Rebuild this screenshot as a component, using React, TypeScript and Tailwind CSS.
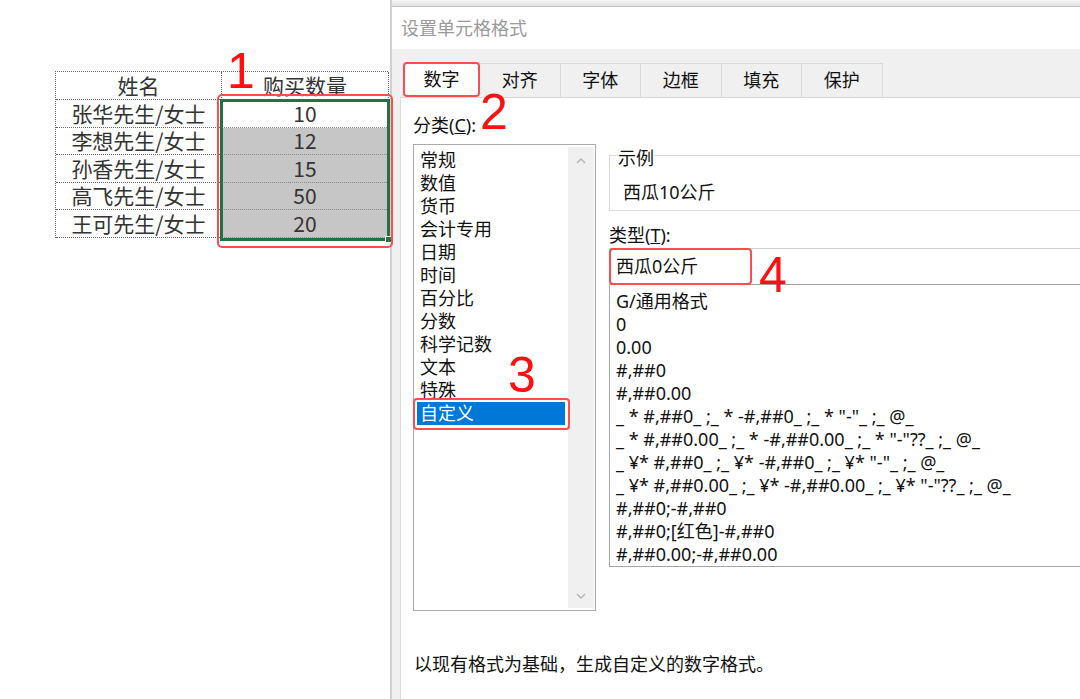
import { FC } from 'react';

const people = [
  { name: '张华先生/女士', qty: '10' },
  { name: '李想先生/女士', qty: '12' },
  { name: '孙香先生/女士', qty: '15' },
  { name: '高飞先生/女士', qty: '50' },
  { name: '王可先生/女士', qty: '20' },
];

const tabs = ['数字', '对齐', '字体', '边框', '填充', '保护'];

const categories = [
  '常规',
  '数值',
  '货币',
  '会计专用',
  '日期',
  '时间',
  '百分比',
  '分数',
  '科学记数',
  '文本',
  '特殊',
  '自定义',
];

const formats = [
  'G/通用格式',
  '0',
  '0.00',
  '#,##0',
  '#,##0.00',
  '_ * #,##0_ ;_ * -#,##0_ ;_ * "-"_ ;_ @_',
  '_ * #,##0.00_ ;_ * -#,##0.00_ ;_ * "-"??_ ;_ @_',
  '_ ¥* #,##0_ ;_ ¥* -#,##0_ ;_ ¥* "-"_ ;_ @_',
  '_ ¥* #,##0.00_ ;_ ¥* -#,##0.00_ ;_ ¥* "-"??_ ;_ @_',
  '#,##0;-#,##0',
  '#,##0;[红色]-#,##0',
  '#,##0.00;-#,##0.00',
];

// red step numbers drawn over the screenshot
const Mark: FC<{ n: string; className: string }> = ({ n, className }) => (
  <span
    className={`absolute z-30 text-[50px] leading-none text-[#ff1010] font-['Liberation_Sans',sans-serif] ${className}`}
  >
    {n}
  </span>
);

const Chevron: FC<{ up?: boolean }> = ({ up }) => (
  <svg width="10" height="6" viewBox="0 0 10 6">
    <polyline
      points={up ? '1,5 5,1 9,5' : '1,1 5,5 9,1'}
      fill="none"
      stroke="#b0b0b0"
      strokeWidth="1.3"
    />
  </svg>
);

const Sheet = () => (
  <div className="w-[390px] shrink-0 pt-[71px] pl-[55px] font-['Noto_Sans_CJK_SC',sans-serif] text-[21px] text-[#333]">
    <div className="relative w-[333px] border-t border-l border-dotted border-[#666]">
      <div className="grid grid-cols-[166px_167px]">
        <div className="h-[28px] flex items-center justify-center border-r border-b border-dotted border-[#666]">
          姓名
        </div>
        <div className="h-[28px] flex items-center justify-center border-r border-b border-dotted border-[#666]">
          购买数量
        </div>
        {people.map((p, i) => (
          <div key={p.name} className="contents">
            <div className="h-[27.5px] flex items-center justify-center border-r border-b border-dotted border-[#666]">
              {p.name}
            </div>
            <div
              className={`h-[27.5px] flex items-center justify-center border-r border-b border-dotted border-[#888] ${
                i === 0 ? 'bg-white' : 'bg-[#c6c6c6]'
              }`}
            >
              {p.qty}
            </div>
          </div>
        ))}
      </div>

      <div className="absolute z-10 left-[164px] top-[27px] w-[170px] h-[142px] border-[3px] border-[#217346]">
        <div className="absolute -right-[5px] -bottom-[5px] w-[7px] h-[7px] bg-[#217346] border border-white" />
      </div>
      <div className="absolute z-20 left-[161px] top-[22px] w-[176px] h-[154px] rounded-[5px] border-2 border-[#ff4d4d]" />
    </div>
  </div>
);

const Dialog = () => (
  <div className="flex-1 min-w-0 flex flex-col border-l-2 border-[#d0d0d0] font-['Noto_Sans','Noto_Sans_CJK_SC',sans-serif] text-[18px] text-[#111]">
    <div className="h-[7px] bg-linear-to-b from-[#f6f6f6] to-[#e2e2e2] border-b border-[#c4c4c4]" />
    <div className="h-[42px] flex items-center pl-[9px] bg-white text-[#9a9a9a]">
      设置单元格格式
    </div>

    <div className="flex-1 flex flex-col bg-[#f0f0f0] pl-[8px]">
      <div className="h-[48px] flex items-end pl-[3px]">
        {tabs.map((t, i) =>
          i === 0 ? (
            <div
              key={t}
              className="w-[77px] h-[35px] flex items-center justify-center bg-white rounded-[4px] border-2 border-[#ff4d4d]"
            >
              {t}
            </div>
          ) : (
            <div
              key={t}
              className="w-[80.5px] h-[34px] flex items-center justify-center border-t border-r border-[#dadada]"
            >
              {t}
            </div>
          )
        )}
      </div>

      <div className="flex-1 overflow-hidden bg-white border-l border-t border-[#dadada] pl-[12px] pt-[17px]">
        <div className="flex">
          <div className="w-[183px] shrink-0">
            <div className="h-[20px] leading-[20px]">
              分类(<span className="underline">C</span>):
            </div>
            <div className="mt-[9px] h-[467px] flex border border-[#ababab]">
              <div className="flex-1 pt-[4px] px-[3px]">
                {categories.map((c, i) =>
                  i === categories.length - 1 ? (
                    <div
                      key={c}
                      className="relative h-[23px] leading-[23px] pl-[3px] bg-[#0078d7] text-white"
                    >
                      {c}
                      <div className="absolute -left-[4px] -right-[5px] -top-[4px] -bottom-[5px] rounded-[4px] border-2 border-[#ff4d4d]" />
                    </div>
                  ) : (
                    <div key={c} className="h-[23px] leading-[23px] pl-[3px]">
                      {c}
                    </div>
                  )
                )}
              </div>
              <div className="w-[26px] my-[2px] mr-[1px] bg-[#f0f0f0] flex flex-col items-center justify-between pt-[11px] pb-[9px]">
                <Chevron up />
                <Chevron />
              </div>
            </div>
          </div>

          <div className="w-[500px] shrink-0 ml-[13px]">
            <div className="relative mt-[40px] h-[56px] border border-[#dcdcdc] pl-[13px] pt-[25px]">
              <span className="absolute left-[8px] -top-[9px] leading-[22px] bg-white">
                示例
              </span>
              <div className="leading-[22px]">西瓜10公斤</div>
            </div>
            <div className="mt-[13px] leading-[22px]">
              类型(<span className="underline">T</span>):
            </div>
            <div className="relative mt-[2px] h-[37px] flex items-center pl-[6px] border border-[#d0d0d0] border-b-[#9f9f9f]">
              西瓜0公斤
              <div className="absolute -left-px -top-px w-[143px] h-[37px] rounded-[4px] border-2 border-[#ff4d4d]" />
            </div>
            <div className="h-[282px] border-l border-b border-[#a5a5a5] pt-[5px]">
              {formats.map((f) => (
                <div key={f} className="h-[23px] leading-[23px] pl-[6px] whitespace-pre">
                  {f}
                </div>
              ))}
            </div>
          </div>
        </div>

        <p className="mt-[42px] pl-px leading-[22px]">
          以现有格式为基础，生成自定义的数字格式。
        </p>
      </div>
    </div>
  </div>
);

const App = () => {
  return (
    <div className="relative w-[1080px] h-[699px] overflow-hidden bg-white flex">
      <Sheet />
      <Dialog />

      <Mark n="1" className="left-[227px] top-[46px]" />
      <Mark n="2" className="left-[480px] top-[87px]" />
      <Mark n="3" className="left-[508px] top-[350px]" />
      <Mark n="4" className="left-[759px] top-[250px]" />
    </div>
  );
};

export default App;
